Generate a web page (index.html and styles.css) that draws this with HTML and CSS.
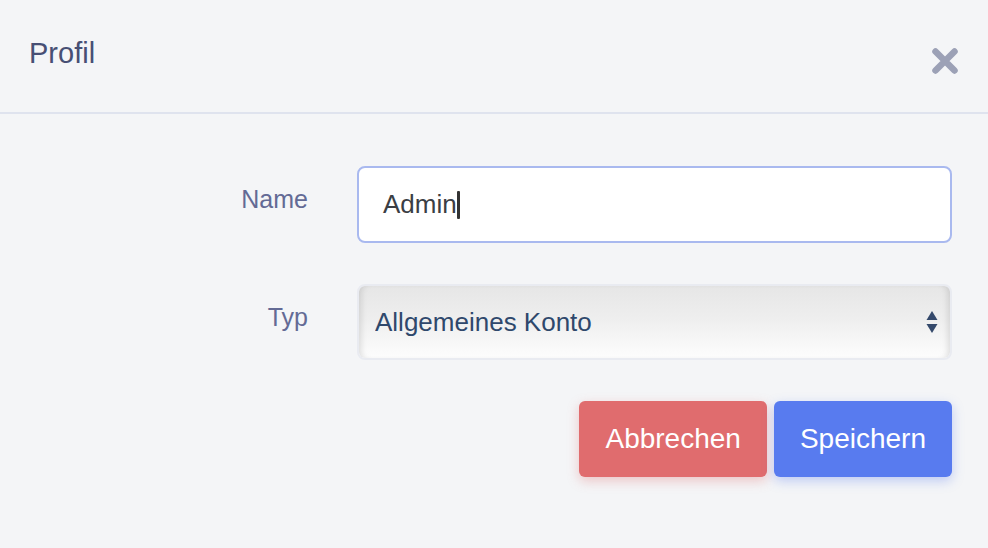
FILE: index.html
```html
<!DOCTYPE html>
<html lang="de">
<head>
  <meta charset="UTF-8">
  <meta name="viewport" content="width=device-width, initial-scale=1.0">
  <title>Profil</title>
  <link rel="stylesheet" href="styles.css">
</head>
<body>

<div class="modal">
  <!-- Kopfzeile -->
  <div class="modal-header">
    <h1 class="modal-title">Profil</h1>
    <button class="close-btn" aria-label="Schließen">
      <svg width="28" height="28" viewBox="0 0 28 28">
        <path d="M4.5 4.5 L23.5 23.5 M23.5 4.5 L4.5 23.5" stroke="#9ca1b6" stroke-width="6.5" stroke-linecap="round"/>
      </svg>
    </button>
  </div>

  <!-- Formular -->
  <div class="modal-body">
    <div class="form-row">
      <label class="form-label">Name</label>
      <div class="text-field">Admin<span class="caret"></span></div>
    </div>

    <div class="form-row">
      <label class="form-label">Typ</label>
      <div class="select-wrap">
        <select class="select-field">
          <option>Allgemeines Konto</option>
          <option>Administrator</option>
        </select>
        <svg class="select-arrows" width="12" height="24" viewBox="0 0 12 24">
          <path d="M6 1 L11.5 10 L0.5 10 Z" fill="#34496b"/>
          <path d="M0.5 14 L11.5 14 L6 23 Z" fill="#34496b"/>
        </svg>
      </div>
    </div>

    <div class="actions">
      <button class="btn cancel">Abbrechen</button>
      <button class="btn save">Speichern</button>
    </div>
  </div>
</div>

</body>
</html>
```

FILE: styles.css
```css
/* Grundlayout */
body {
  margin: 0;
  font-family: 'Liberation Sans', Arial, sans-serif;
  background-color: #f4f5f7;
}

.modal {
  width: 988px;
  height: 548px;
}

/* Kopfzeile */
.modal-header {
  display: flex;
  align-items: center;
  justify-content: space-between;
  height: 114px;
  padding: 0 29px;
  border-bottom: 2px solid #dfe3ee;
  box-sizing: border-box;
}

.modal-title {
  margin: 0 0 6px 0;
  font-size: 29px;
  font-weight: normal;
  color: #474f74;
}

.close-btn {
  background: none;
  border: none;
  padding: 0;
  margin: 10px 0 0 0;
  cursor: pointer;
  display: flex;
}

/* Formular */
.modal-body {
  padding: 52px 36px 0 0;
  display: flex;
  flex-direction: column;
  gap: 41px;
}

.form-row {
  display: grid;
  grid-template-columns: 308px 1fr;
  column-gap: 49px;
  align-items: start;
}

.form-label {
  text-align: right;
  font-size: 25px;
  line-height: 1;
  padding-top: 21px;
  color: #636a95;
}

.text-field {
  height: 77px;
  box-sizing: border-box;
  border: 2px solid #a9b9ef;
  border-radius: 8px;
  background: #fff;
  padding: 0 24px;
  display: flex;
  align-items: center;
  font-size: 26px;
  color: #3b3e44;
}

.caret {
  display: inline-block;
  width: 3px;
  height: 28px;
  background: #333;
  border-radius: 1px;
}

/* Auswahlfeld */
.select-wrap {
  position: relative;
}

.select-field {
  width: 100%;
  height: 76px;
  -webkit-appearance: none;
  appearance: none;
  border: 2px solid #e9ebf1;
  border-radius: 8px;
  padding: 0 16px;
  font-family: inherit;
  font-size: 26px;
  color: #2f486c;
  background: linear-gradient(180deg, #e6e6e6 0%, #eeeeee 45%, #fdfdfd 100%);
  box-shadow: inset 6px 0 6px -4px rgba(0, 0, 0, 0.12), inset -6px 0 6px -4px rgba(0, 0, 0, 0.12);
  outline: none;
}

.select-arrows {
  position: absolute;
  right: 14px;
  top: 26px;
  pointer-events: none;
}

/* Buttons */
.actions {
  display: flex;
  justify-content: flex-end;
  gap: 7px;
}

.btn {
  height: 76px;
  border: none;
  border-radius: 6px;
  padding: 0 26px;
  font-family: inherit;
  font-size: 28px;
  color: #fff;
  cursor: pointer;
}

.cancel {
  background: #e06c6e;
  box-shadow: 0 4px 12px rgba(224, 108, 110, 0.35);
}

.save {
  background: #587bef;
  box-shadow: 0 4px 12px rgba(88, 123, 239, 0.35);
}
```
